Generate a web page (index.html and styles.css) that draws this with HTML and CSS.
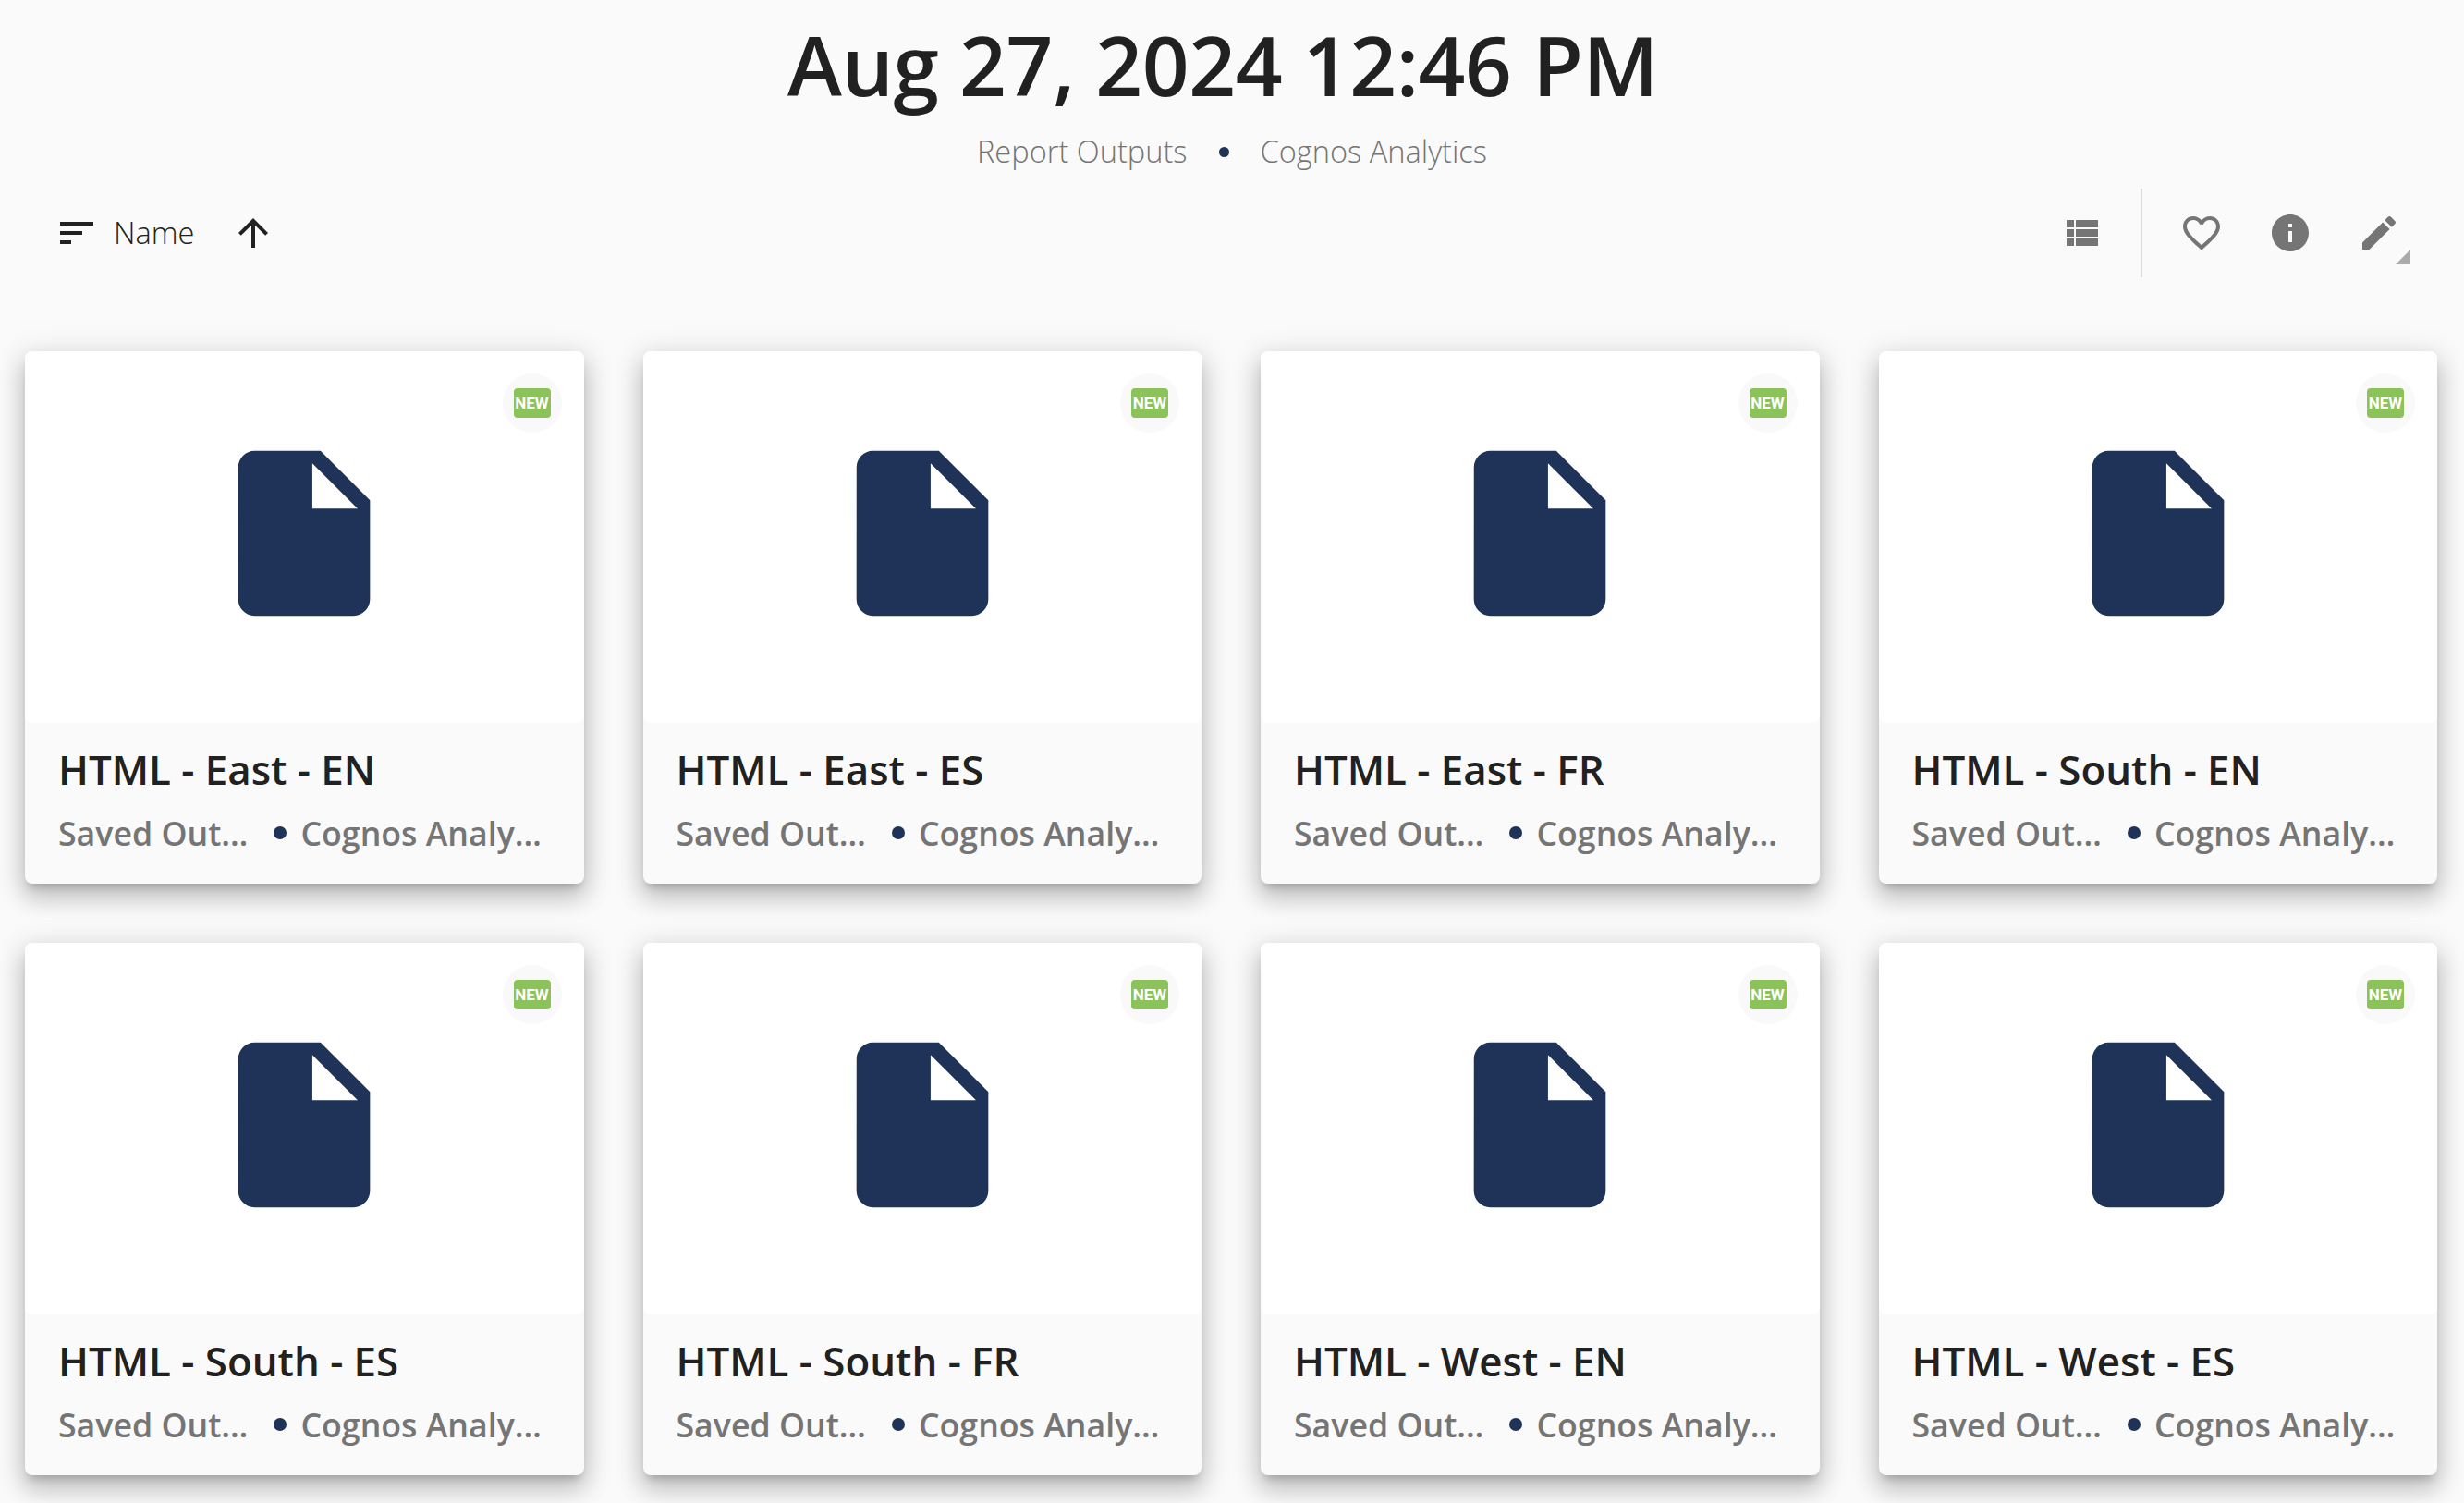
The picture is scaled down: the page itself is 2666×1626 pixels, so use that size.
FILE: index.html
```html
<!DOCTYPE html>
<html lang="en">
<head>
  <meta charset="UTF-8" />
  <title>Aug 27, 2024 12:46 PM</title>
  <link rel="stylesheet" href="styles.css">
</head>
<body>
  <svg class="sprite" aria-hidden="true">
    <symbol id="icon-file" viewBox="0 0 24 24"><path d="M6 2c-1.1 0-1.99.9-1.99 2L4 20c0 1.1.89 2 1.99 2H18c1.1 0 2-.9 2-2V8l-6-6H6zm7 7V3.5L18.5 9H13z"/></symbol>
  </svg>

  <header>
    <h1>Aug 27, 2024 12:46 PM</h1>
    <p class="crumbs"><span>Report Outputs</span><i class="dot"></i><span>Cognos Analytics</span></p>
  </header>

  <div class="toolbar">
    <div class="sort">
      <svg class="icon" viewBox="0 0 24 24"><path d="M3 18h6v-2H3v2zM3 6v2h18V6H3zm0 7h12v-2H3v2z"/></svg>
      <span class="sort-label">Name</span>
      <svg class="icon" viewBox="0 0 24 24"><path d="M4 12l1.41 1.41L11 7.83V20h2V7.83l5.58 5.59L20 12l-8-8-8 8z"/></svg>
    </div>
    <div class="actions">
      <svg class="icon" viewBox="0 0 24 24"><path d="M4 14h4v-4H4v4zm0 5h4v-4H4v4zM4 9h4V5H4v4zm5 5h12v-4H9v4zm0 5h12v-4H9v4zM9 5v4h12V5H9z"/></svg>
      <div class="divider"></div>
      <svg class="icon" viewBox="0 0 24 24"><path d="M16.5 3c-1.74 0-3.41.81-4.5 2.09C10.91 3.81 9.24 3 7.5 3 4.42 3 2 5.42 2 8.5c0 3.78 3.4 6.86 8.55 11.54L12 21.35l1.45-1.32C18.6 15.36 22 12.28 22 8.5 22 5.42 19.58 3 16.5 3zm-4.4 15.55l-.1.1-.1-.1C7.14 14.24 4 11.39 4 8.5 4 6.5 5.5 5 7.5 5c1.54 0 3.04.99 3.57 2.36h1.87C13.46 5.99 14.96 5 16.5 5c2 0 3.5 1.5 3.5 3.5 0 2.89-3.14 5.74-7.9 10.05z"/></svg>
      <svg class="icon" viewBox="0 0 24 24"><path d="M12 2C6.48 2 2 6.48 2 12s4.48 10 10 10 10-4.48 10-10S17.52 2 12 2zm1 15h-2v-6h2v6zm0-8h-2V7h2v2z"/></svg>
      <div class="edit">
        <svg class="icon" viewBox="0 0 24 24"><path d="M3 17.25V21h3.75L17.81 9.94l-3.75-3.75L3 17.25zM20.71 7.04c.39-.39.39-1.02 0-1.41l-2.34-2.34c-.39-.39-1.02-.39-1.41 0l-1.83 1.83 3.75 3.75 1.83-1.83z"/></svg>
        <span class="corner"></span>
      </div>
    </div>
  </div>

  <main class="grid">
    <article class="card">
      <div class="thumb"><span class="badge"><b>NEW</b></span><svg class="file"><use href="#icon-file"/></svg></div>
      <div class="info"><h3>HTML - East - EN</h3><p class="meta"><span>Saved Out…</span><i class="dot small"></i><span>Cognos Analy…</span></p></div>
    </article>
    <article class="card">
      <div class="thumb"><span class="badge"><b>NEW</b></span><svg class="file"><use href="#icon-file"/></svg></div>
      <div class="info"><h3>HTML - East - ES</h3><p class="meta"><span>Saved Out…</span><i class="dot small"></i><span>Cognos Analy…</span></p></div>
    </article>
    <article class="card">
      <div class="thumb"><span class="badge"><b>NEW</b></span><svg class="file"><use href="#icon-file"/></svg></div>
      <div class="info"><h3>HTML - East - FR</h3><p class="meta"><span>Saved Out…</span><i class="dot small"></i><span>Cognos Analy…</span></p></div>
    </article>
    <article class="card">
      <div class="thumb"><span class="badge"><b>NEW</b></span><svg class="file"><use href="#icon-file"/></svg></div>
      <div class="info"><h3>HTML - South - EN</h3><p class="meta"><span>Saved Out…</span><i class="dot small"></i><span>Cognos Analy…</span></p></div>
    </article>
    <article class="card">
      <div class="thumb"><span class="badge"><b>NEW</b></span><svg class="file"><use href="#icon-file"/></svg></div>
      <div class="info"><h3>HTML - South - ES</h3><p class="meta"><span>Saved Out…</span><i class="dot small"></i><span>Cognos Analy…</span></p></div>
    </article>
    <article class="card">
      <div class="thumb"><span class="badge"><b>NEW</b></span><svg class="file"><use href="#icon-file"/></svg></div>
      <div class="info"><h3>HTML - South - FR</h3><p class="meta"><span>Saved Out…</span><i class="dot small"></i><span>Cognos Analy…</span></p></div>
    </article>
    <article class="card">
      <div class="thumb"><span class="badge"><b>NEW</b></span><svg class="file"><use href="#icon-file"/></svg></div>
      <div class="info"><h3>HTML - West - EN</h3><p class="meta"><span>Saved Out…</span><i class="dot small"></i><span>Cognos Analy…</span></p></div>
    </article>
    <article class="card">
      <div class="thumb"><span class="badge"><b>NEW</b></span><svg class="file"><use href="#icon-file"/></svg></div>
      <div class="info"><h3>HTML - West - ES</h3><p class="meta"><span>Saved Out…</span><i class="dot small"></i><span>Cognos Analy…</span></p></div>
    </article>
  </main>
</body>
</html>
```

FILE: styles.css
```css
* { box-sizing: border-box; margin: 0; padding: 0; }
html, body { height: 100%; overflow: hidden; }
body { font-family: 'Open Sans', sans-serif; background: #fafafa; color: #212121; }
.sprite { display: none; }

/* Header */
header { text-align: center; padding-top: 16px; }
h1 { font-size: 89px; line-height: 108px; font-weight: 600; letter-spacing: -0.45px; padding-right: 20px; }
.crumbs {
  display: flex; justify-content: center; align-items: center; gap: 34px;
  margin-top: 18px; font-size: 32.6px; line-height: 44px; font-weight: 300; color: #757575;
}
.dot { display: block; width: 11px; height: 11px; border-radius: 50%; background: #1e3357; }
.dot.small { width: 14px; height: 14px; flex: none; }

/* Toolbar */
.toolbar {
  display: flex; justify-content: space-between; align-items: center;
  height: 96px; margin-top: 18px; padding: 0 68px 0 59px;
}
.icon { display: block; width: 48px; height: 48px; fill: #757575; }
.sort { display: flex; align-items: center; }
.sort .icon { fill: #212121; }
.sort-label { font-size: 32.6px; line-height: 44px; font-weight: 300; margin: 0 40px 1px 16px; }
.actions { display: flex; align-items: center; gap: 48px; height: 100%; }
.divider { width: 2px; height: 100%; background: #ddd; margin: 0 -8px; }
.edit { position: relative; }
.corner {
  position: absolute; left: 42px; top: 42px; width: 16px; height: 16px;
  background: #aaa; clip-path: polygon(100% 0, 100% 100%, 0 100%);
}

/* Cards */
.grid {
  display: grid; grid-template-columns: repeat(4, 1fr); gap: 64px;
  padding: 80px 29px 0 27px;
}
.card {
  height: 576px; border-radius: 8px; background: #fafafa;
  box-shadow: 0 8px 10px -5px rgba(0,0,0,.2), 0 16px 24px 2px rgba(0,0,0,.14), 0 6px 30px 5px rgba(0,0,0,.12);
}
.thumb {
  position: relative; height: 402px; padding-top: 90px; background: #fff;
  border-radius: 8px; text-align: center;
}
.file { display: block; width: 214px; height: 214px; margin: 0 auto; fill: #1e3357; }
.badge {
  position: absolute; top: 24px; right: 24px; width: 64px; height: 64px;
  display: flex; align-items: center; justify-content: center;
  border-radius: 50%; background: #f9f9f9;
}
.badge b {
  width: 40px; height: 32px; border-radius: 4px; background: #8bc25a; color: #fff;
  font-family: Roboto, sans-serif; font-size: 17px; line-height: 32px; font-weight: 700; text-align: center;
}
.info { padding: 20px 36px 0; }
h3 { font-size: 43.85px; line-height: 60px; font-weight: 600; white-space: nowrap; }
.meta {
  display: flex; align-items: center; margin-top: 15px;
  font-size: 35.7px; line-height: 48px; font-weight: 600; color: #757575; white-space: nowrap;
}
.meta .dot { margin: 0 15px 0 28px; }
```
